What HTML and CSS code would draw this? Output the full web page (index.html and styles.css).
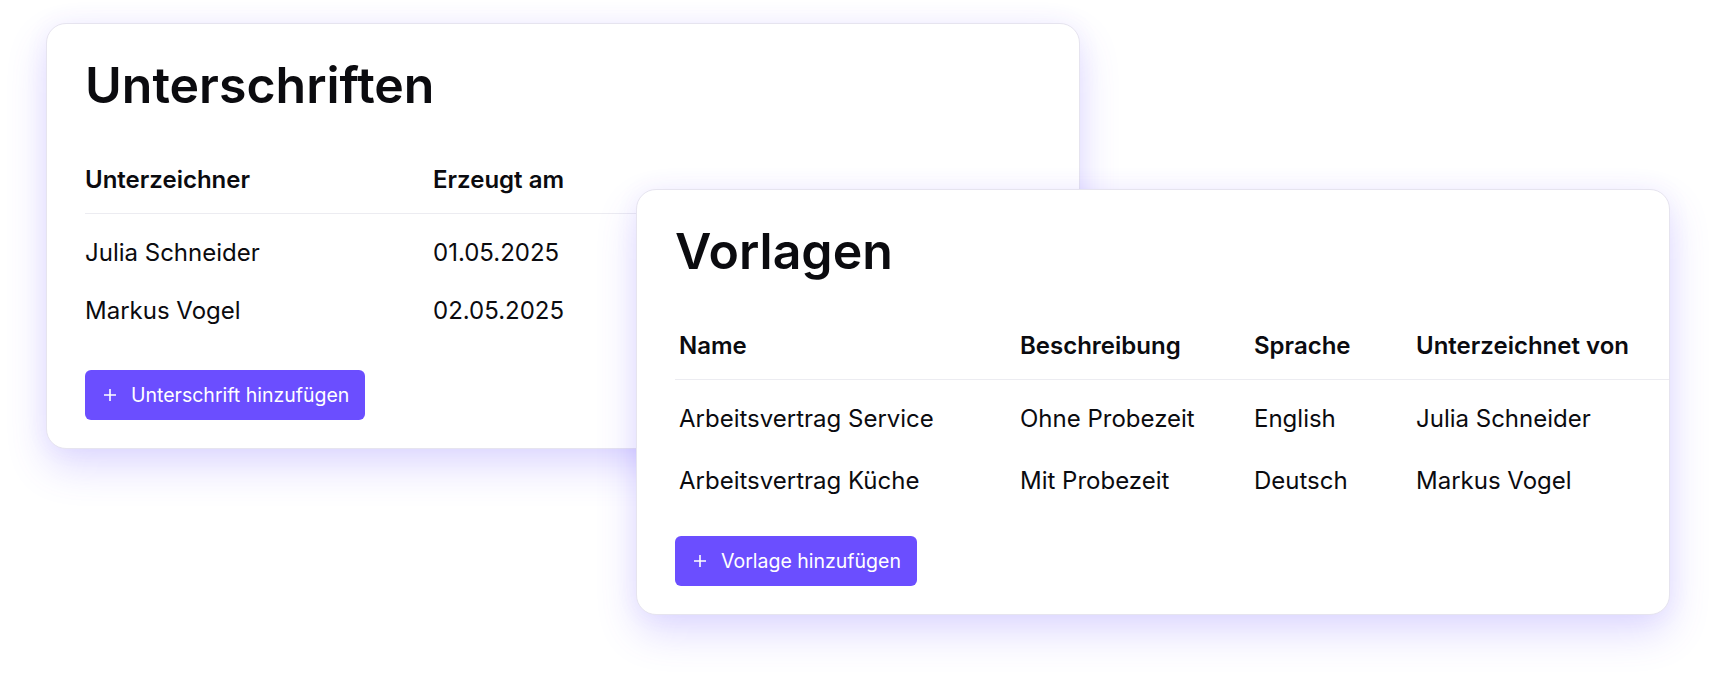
FILE: index.html
```html
<!DOCTYPE html>
<html lang="de">
<head>
    <meta charset="utf-8">
    <title>Unterschriften und Vorlagen</title>
    <link rel="stylesheet" href="styles.css">
</head>
<body>
    <div class="stage">
        <!-- Signatures card -->
        <section class="card card-signatures">
            <h2 class="card-title">Unterschriften</h2>
            <div class="list list-signatures">
                <div class="list-head">
                    <div class="cell">Unterzeichner</div>
                    <div class="cell">Erzeugt am</div>
                </div>
                <div class="list-body">
                    <div class="list-row">
                        <div class="cell">Julia Schneider</div>
                        <div class="cell">01.05.2025</div>
                    </div>
                    <div class="list-row">
                        <div class="cell">Markus Vogel</div>
                        <div class="cell">02.05.2025</div>
                    </div>
                </div>
            </div>
            <button class="add-button">
                <svg class="plus" viewBox="0 0 14 14" width="14" height="14"><path d="M7 1v12M1 7h12"/></svg>
                Unterschrift hinzufügen
            </button>
        </section>

        <!-- Templates card, lies over the signatures card -->
        <section class="card card-templates">
            <h2 class="card-title">Vorlagen</h2>
            <div class="list list-templates">
                <div class="list-head">
                    <div class="cell">Name</div>
                    <div class="cell">Beschreibung</div>
                    <div class="cell">Sprache</div>
                    <div class="cell">Unterzeichnet von</div>
                </div>
                <div class="list-body">
                    <div class="list-row">
                        <div class="cell">Arbeitsvertrag Service</div>
                        <div class="cell">Ohne Probezeit</div>
                        <div class="cell">English</div>
                        <div class="cell">Julia Schneider</div>
                    </div>
                    <div class="list-row">
                        <div class="cell">Arbeitsvertrag Küche</div>
                        <div class="cell">Mit Probezeit</div>
                        <div class="cell">Deutsch</div>
                        <div class="cell">Markus Vogel</div>
                    </div>
                </div>
            </div>
            <button class="add-button">
                <svg class="plus" viewBox="0 0 14 14" width="14" height="14"><path d="M7 1v12M1 7h12"/></svg>
                Vorlage hinzufügen
            </button>
        </section>
    </div>
</body>
</html>
```

FILE: styles.css
```css
/* Page and canvas */
body {
    margin: 0;
    background-color: #fff;
    font-family: 'Inter', 'Noto Sans', sans-serif;
    color: #0b0b0f;
}
.stage {
    padding: 23px 0 80px 46px;
}

/* Cards */
.card {
    box-sizing: border-box;
    width: 1034px;
    height: 426px;
    padding: 30px 38px 28px 38px;
    background-color: #fff;
    border: 1px solid #e6e4ef;
    border-radius: 20px;
    box-shadow: 0 18px 40px rgba(98, 74, 255, 0.2), 0 0 24px rgba(98, 74, 255, 0.06);
    overflow: hidden;
}
.card-templates {
    position: relative;
    margin: -260px 0 0 590px;
}
.card-title {
    margin: 0;
    font-size: 50px;
    line-height: 62px;
    font-weight: 600;
}

/* Lists */
.list {
    margin-top: 49px;
}
.list-head,
.list-row {
    display: grid;
    font-size: 24px;
    line-height: 30px;
}
.list-head {
    font-weight: 600;
    padding-bottom: 18px;
    margin-right: -38px;
    border-bottom: 1px solid #ececf1;
}
.list-signatures .list-head,
.list-signatures .list-row {
    grid-template-columns: 348px 1fr;
}
.list-templates .list-head,
.list-templates .list-row {
    grid-template-columns: 341px 234px 162px 1fr;
}
.list-templates .cell {
    padding-left: 4px;
}
.list-signatures .list-body {
    padding-top: 10px;
}
.list-signatures .list-row {
    padding: 14px 0;
}
.list-templates .list-body {
    padding-top: 8px;
}
.list-templates .list-row {
    padding: 16px 0;
}
.cell {
    white-space: nowrap;
}

/* Buttons */
.add-button {
    display: flex;
    align-items: center;
    gap: 14px;
    height: 50px;
    margin-top: 30px;
    padding: 0 16px 0 18px;
    background-color: #6b4eff;
    color: #fff;
    border: none;
    border-radius: 6px;
    font-family: 'Inter', 'Noto Sans', sans-serif;
    font-size: 19.5px;
    font-weight: 400;
    cursor: pointer;
}
.card-templates .add-button {
    margin-top: 24px;
}
.plus {
    fill: none;
    stroke: #fff;
    stroke-width: 1.6;
}
```
